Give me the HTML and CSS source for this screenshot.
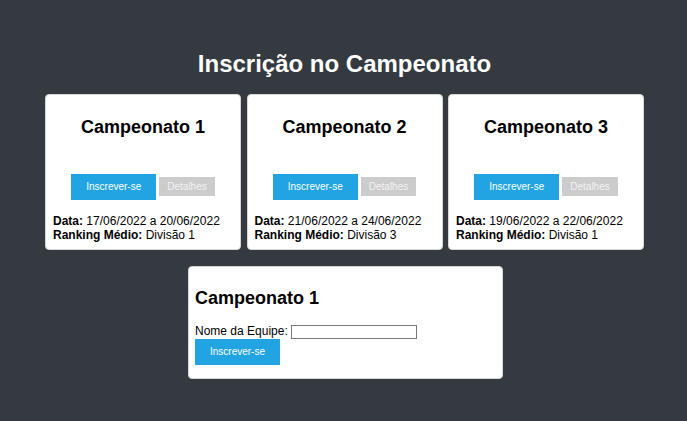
FILE: index.html
```html
<!DOCTYPE html>
<html lang="pt-BR">
<head>
<meta charset="utf-8">
<title>Inscrição no Campeonato</title>
<link rel="stylesheet" href="styles.css">
</head>
<body>
<main class="page">
  <h1 class="page-title">Inscrição no Campeonato</h1>
  <section class="cards">
    <article class="card">
      <h2 class="card-title">Campeonato 1</h2>
      <div class="actions">
        <button class="btn btn-primary">Inscrever-se</button>
        <button class="btn btn-secondary">Detalhes</button>
      </div>
      <p class="info"><b>Data:</b> 17/06/2022 a 20/06/2022<br><b>Ranking Médio:</b> Divisão 1</p>
    </article>
    <article class="card">
      <h2 class="card-title">Campeonato 2</h2>
      <div class="actions">
        <button class="btn btn-primary">Inscrever-se</button>
        <button class="btn btn-secondary">Detalhes</button>
      </div>
      <p class="info"><b>Data:</b> 21/06/2022 a 24/06/2022<br><b>Ranking Médio:</b> Divisão 3</p>
    </article>
    <article class="card">
      <h2 class="card-title">Campeonato 3</h2>
      <div class="actions">
        <button class="btn btn-primary">Inscrever-se</button>
        <button class="btn btn-secondary">Detalhes</button>
      </div>
      <p class="info"><b>Data:</b> 19/06/2022 a 22/06/2022<br><b>Ranking Médio:</b> Divisão 1</p>
    </article>
  </section>
  <section class="form-card">
    <h2 class="form-title">Campeonato 1</h2>
    <form class="form">
      <div class="field">
        <label class="label" for="team">Nome da Equipe:</label>
        <input class="input" id="team" type="text">
      </div>
      <button class="btn btn-primary" type="button">Inscrever-se</button>
    </form>
  </section>
</main>
</body>
</html>
```

FILE: styles.css
```css
* { box-sizing: border-box; }

html, body {
  margin: 0;
  background: #343a40;
  font-family: "Liberation Sans", Arial, sans-serif;
  color: #000;
}

.page {
  width: 601px;
  margin: 0 auto;
  padding: 50px 0 0 2px;
}

.page-title {
  margin: 0 0 16.4px;
  font-size: 24px;
  font-weight: bold;
  line-height: normal;
  text-align: center;
  color: #fff;
}

.cards {
  display: flex;
  gap: 5.5px;
}

.card {
  width: 196px;
  background: #fff;
  border: 1px solid #d6d6d6;
  border-radius: 4px;
  padding: 7px;
}

.card-title {
  margin: 14.94px 0;
  font-size: 18px;
  font-weight: bold;
  line-height: normal;
  text-align: center;
}

.actions {
  margin-top: 35.36px;
  height: 26px;
  display: flex;
  justify-content: center;
  align-items: center;
  gap: 3px;
}

.btn {
  font-family: "Liberation Sans", Arial, sans-serif;
  font-size: 10px;
  line-height: 12px;
  border: none;
  border-radius: 0;
  margin: 0;
  cursor: pointer;
}

.btn-primary {
  display: block;
  height: 26px;
  padding: 0 15px;
  background: #21a4e1;
  color: #fff;
}

.btn-secondary {
  height: 19px;
  padding: 0 8px;
  background: #cccccc;
  color: #f2f2f2;
}

.info {
  margin: 14.5px 0 0;
  font-size: 12px;
  line-height: normal;
}

.form-card {
  width: 315px;
  margin: 16px 0 0 143px;
  background: #fff;
  border: 1px solid #d6d6d6;
  border-radius: 4px;
  padding: 6px;
}

.form-title {
  margin: 14.94px 0;
  font-size: 18px;
  font-weight: bold;
  line-height: normal;
}

.form {
  margin: 0 0 7px;
  font-size: 12px;
}

.field {
  display: flex;
  align-items: flex-start;
  gap: 3.3px;
  height: 15.4px;
}

.label {
  line-height: normal;
}

.input {
  width: 126px;
  height: 14px;
  margin: 1.4px 0 0;
  padding: 0 2px;
  border: 1px solid #767676;
  border-radius: 0;
  font-size: 10px;
  background: #fff;
}
```
